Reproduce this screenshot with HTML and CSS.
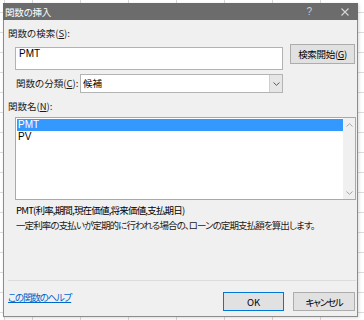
FILE: index.html
```html
<!DOCTYPE html>
<html lang="ja">
<head>
<meta charset="utf-8">
<title>関数の挿入</title>
<link rel="stylesheet" href="styles.css">
</head>
<body>
<div class="screen">
  <div class="dialog">
    <div class="titlebar">
      <span class="title">関数の挿入</span>
      <span class="help">?</span>
      <svg class="close" width="8" height="8" viewBox="0 0 8 8"><path d="M0.5 0.5L7.5 7.5M7.5 0.5L0.5 7.5" stroke="#d6d6d6" stroke-width="1.1" fill="none"/></svg>
    </div>
    <div class="body">
      <div class="label">関数の検索(<u>S</u>):</div>
      <div class="search-row">
        <div class="textbox">PMT</div>
        <div class="btn btn-search">検索開始(<u>G</u>)</div>
      </div>
      <div class="cat-row">
        <span class="cat-label">関数の分類(<u>C</u>):</span>
        <div class="select">
          <span class="select-value">候補</span>
          <span class="select-arrow"><svg width="7" height="4" viewBox="0 0 7 4"><path d="M0.5 0.5L3.5 3.3L6.5 0.5" stroke="#5a5a5a" stroke-width="1" fill="none"/></svg></span>
        </div>
      </div>
      <div class="label label-list">関数名(<u>N</u>):</div>
      <div class="listbox">
        <div class="list-items">
          <div class="item selected">PMT</div>
          <div class="item">PV</div>
        </div>
        <div class="scrollbar">
          <svg width="7" height="4" viewBox="0 0 7 4"><path d="M0.5 3.5L3.5 0.7L6.5 3.5" stroke="#a6a6a6" stroke-width="1" fill="none"/></svg>
          <svg width="7" height="4" viewBox="0 0 7 4"><path d="M0.5 0.5L3.5 3.3L6.5 0.5" stroke="#a6a6a6" stroke-width="1" fill="none"/></svg>
        </div>
      </div>
      <div class="syntax">PMT(利率,期間,現在価値,将来価値,支払期日)</div>
      <div class="desc">一定利率の支払いが定期的に行われる場合の、ローンの定期支払額を算出します。</div>
      <div class="footer">
        <a class="help-link" href="#">この関数のヘルプ</a>
        <div class="buttons">
          <div class="btn btn-ok">OK</div>
          <div class="btn btn-cancel">キャンセル</div>
        </div>
      </div>
    </div>
  </div>
</div>
</body>
</html>
```
FILE: styles.css
```css
html, body {
  margin: 0;
  padding: 0;
}
body {
  width: 364px;
  height: 320px;
  overflow: hidden;
  background-color: #ffffff;
  background-image:
    repeating-linear-gradient(to right, #d8d8d8 0 1px, transparent 1px 48px),
    repeating-linear-gradient(to bottom, #dcdcdc 0 1px, transparent 1px 20px);
  background-position: 32px 0, 0 12px;
  font-family: "Noto Sans CJK JP", sans-serif;
  font-feature-settings: "palt";
  font-size: 9.5px;
  color: #1a1a1a;
}
.screen {
  padding: 3px 0 0 3px;
}
.dialog {
  width: 355px;
  height: 314px;
  display: flex;
  flex-direction: column;
  background: #f0f0f0;
  box-shadow: 1px 1px 3px rgba(0,0,0,0.15);
}
.titlebar {
  height: 17px;
  flex: none;
  background: #6c6c6c;
  display: flex;
  align-items: center;
  padding-left: 2px;
  color: #ffffff;
}
.title {
  font-size: 9.5px;
  line-height: 12px;
  letter-spacing: -0.2px;
}
.help {
  margin-left: auto;
  margin-right: 29px;
  color: #cfcfcf;
  font-family: "Liberation Sans", sans-serif;
  font-size: 10px;
  line-height: 10px;
}
.close {
  margin-right: 9px;
  display: block;
}
.body {
  flex: 1;
  display: flex;
  flex-direction: column;
  border: 1px solid #8c8c8c;
  border-top: 0;
  padding: 7px 1px 0 4px;
}
.label {
  line-height: 13px;
  height: 13px;
  white-space: nowrap;
}
.search-row {
  margin-top: 4px;
  display: flex;
  align-items: flex-start;
}
.textbox {
  box-sizing: border-box;
  margin: 3px 0 0 7px;
  width: 269px;
  height: 23px;
  background: #ffffff;
  border: 1px solid #b2b2b2;
  padding: 0 3px;
  font-family: "Liberation Sans", sans-serif;
  font-size: 10px;
  line-height: 11px;
  color: #000;
}
.btn {
  box-sizing: border-box;
  background: #e1e1e1;
  border: 1px solid #adadad;
  display: flex;
  align-items: center;
  justify-content: center;
  color: #000;
  white-space: nowrap;
}
.btn-search {
  margin-left: 7px;
  width: 65px;
  height: 20px;
  margin-right: 1px;
  letter-spacing: -0.3px;
}
.cat-row {
  margin-top: 4px;
  display: flex;
  align-items: center;
  height: 19px;
}
.cat-label {
  width: 64px;
  flex: none;
  padding-left: 8px;
  white-space: nowrap;
  line-height: 13px;
}
.select {
  box-sizing: border-box;
  width: 203px;
  height: 19px;
  background: #ffffff;
  border: 1px solid #b4b4b4;
  display: flex;
  align-items: stretch;
}
.select-value {
  flex: 1;
  padding-left: 2px;
  line-height: 17px;
  color: #000;
}
.select-arrow {
  width: 12px;
  background: #e6e6e6;
  border-left: 1px solid #cfcfcf;
  display: flex;
  align-items: center;
  justify-content: center;
}
.select-arrow svg {
  display: block;
  margin-left: 1px;
}
.label-list {
  margin-top: 7px;
}
.listbox {
  margin: 4px 0 0 7px;
  height: 83px;
  box-sizing: border-box;
  border: 1px solid #a9a9a9;
  background: #ffffff;
  display: flex;
}
.list-items {
  flex: 1;
  padding: 1px 0 0 1px;
}
.item {
  height: 12px;
  line-height: 12px;
  padding-left: 1px;
  font-family: "Liberation Sans", sans-serif;
  font-size: 10px;
  color: #000;
}
.item.selected {
  background: #3399ff;
  color: #ffffff;
}
.scrollbar {
  width: 12px;
  background: #f0f0f0;
  display: flex;
  flex-direction: column;
  align-items: center;
  justify-content: space-between;
  padding: 5px 0 4px;
  box-sizing: border-box;
}
.scrollbar svg {
  display: block;
}
.syntax {
  margin-top: 3px;
  padding-left: 8px;
  line-height: 14px;
  letter-spacing: -0.8px;
  white-space: nowrap;
  color: #000;
}
.desc {
  margin-top: 1px;
  padding-left: 8px;
  line-height: 14px;
  letter-spacing: -0.9px;
  white-space: nowrap;
}
.footer {
  margin-top: auto;
  border-top: 1px solid #dcdcdc;
  padding: 11px 0 5px;
  display: flex;
  justify-content: space-between;
  align-items: flex-start;
}
.help-link {
  color: #0066cc;
  line-height: 10px;
  letter-spacing: -1.2px;
  text-decoration: underline;
  white-space: nowrap;
}
.buttons {
  display: flex;
  gap: 9px;
  margin-right: 1px;
}
.buttons .btn {
  height: 19px;
}
.btn-ok {
  width: 61px;
  border-color: #0078d7;
}
.btn-cancel {
  width: 62px;
  letter-spacing: -1.2px;
}
```
